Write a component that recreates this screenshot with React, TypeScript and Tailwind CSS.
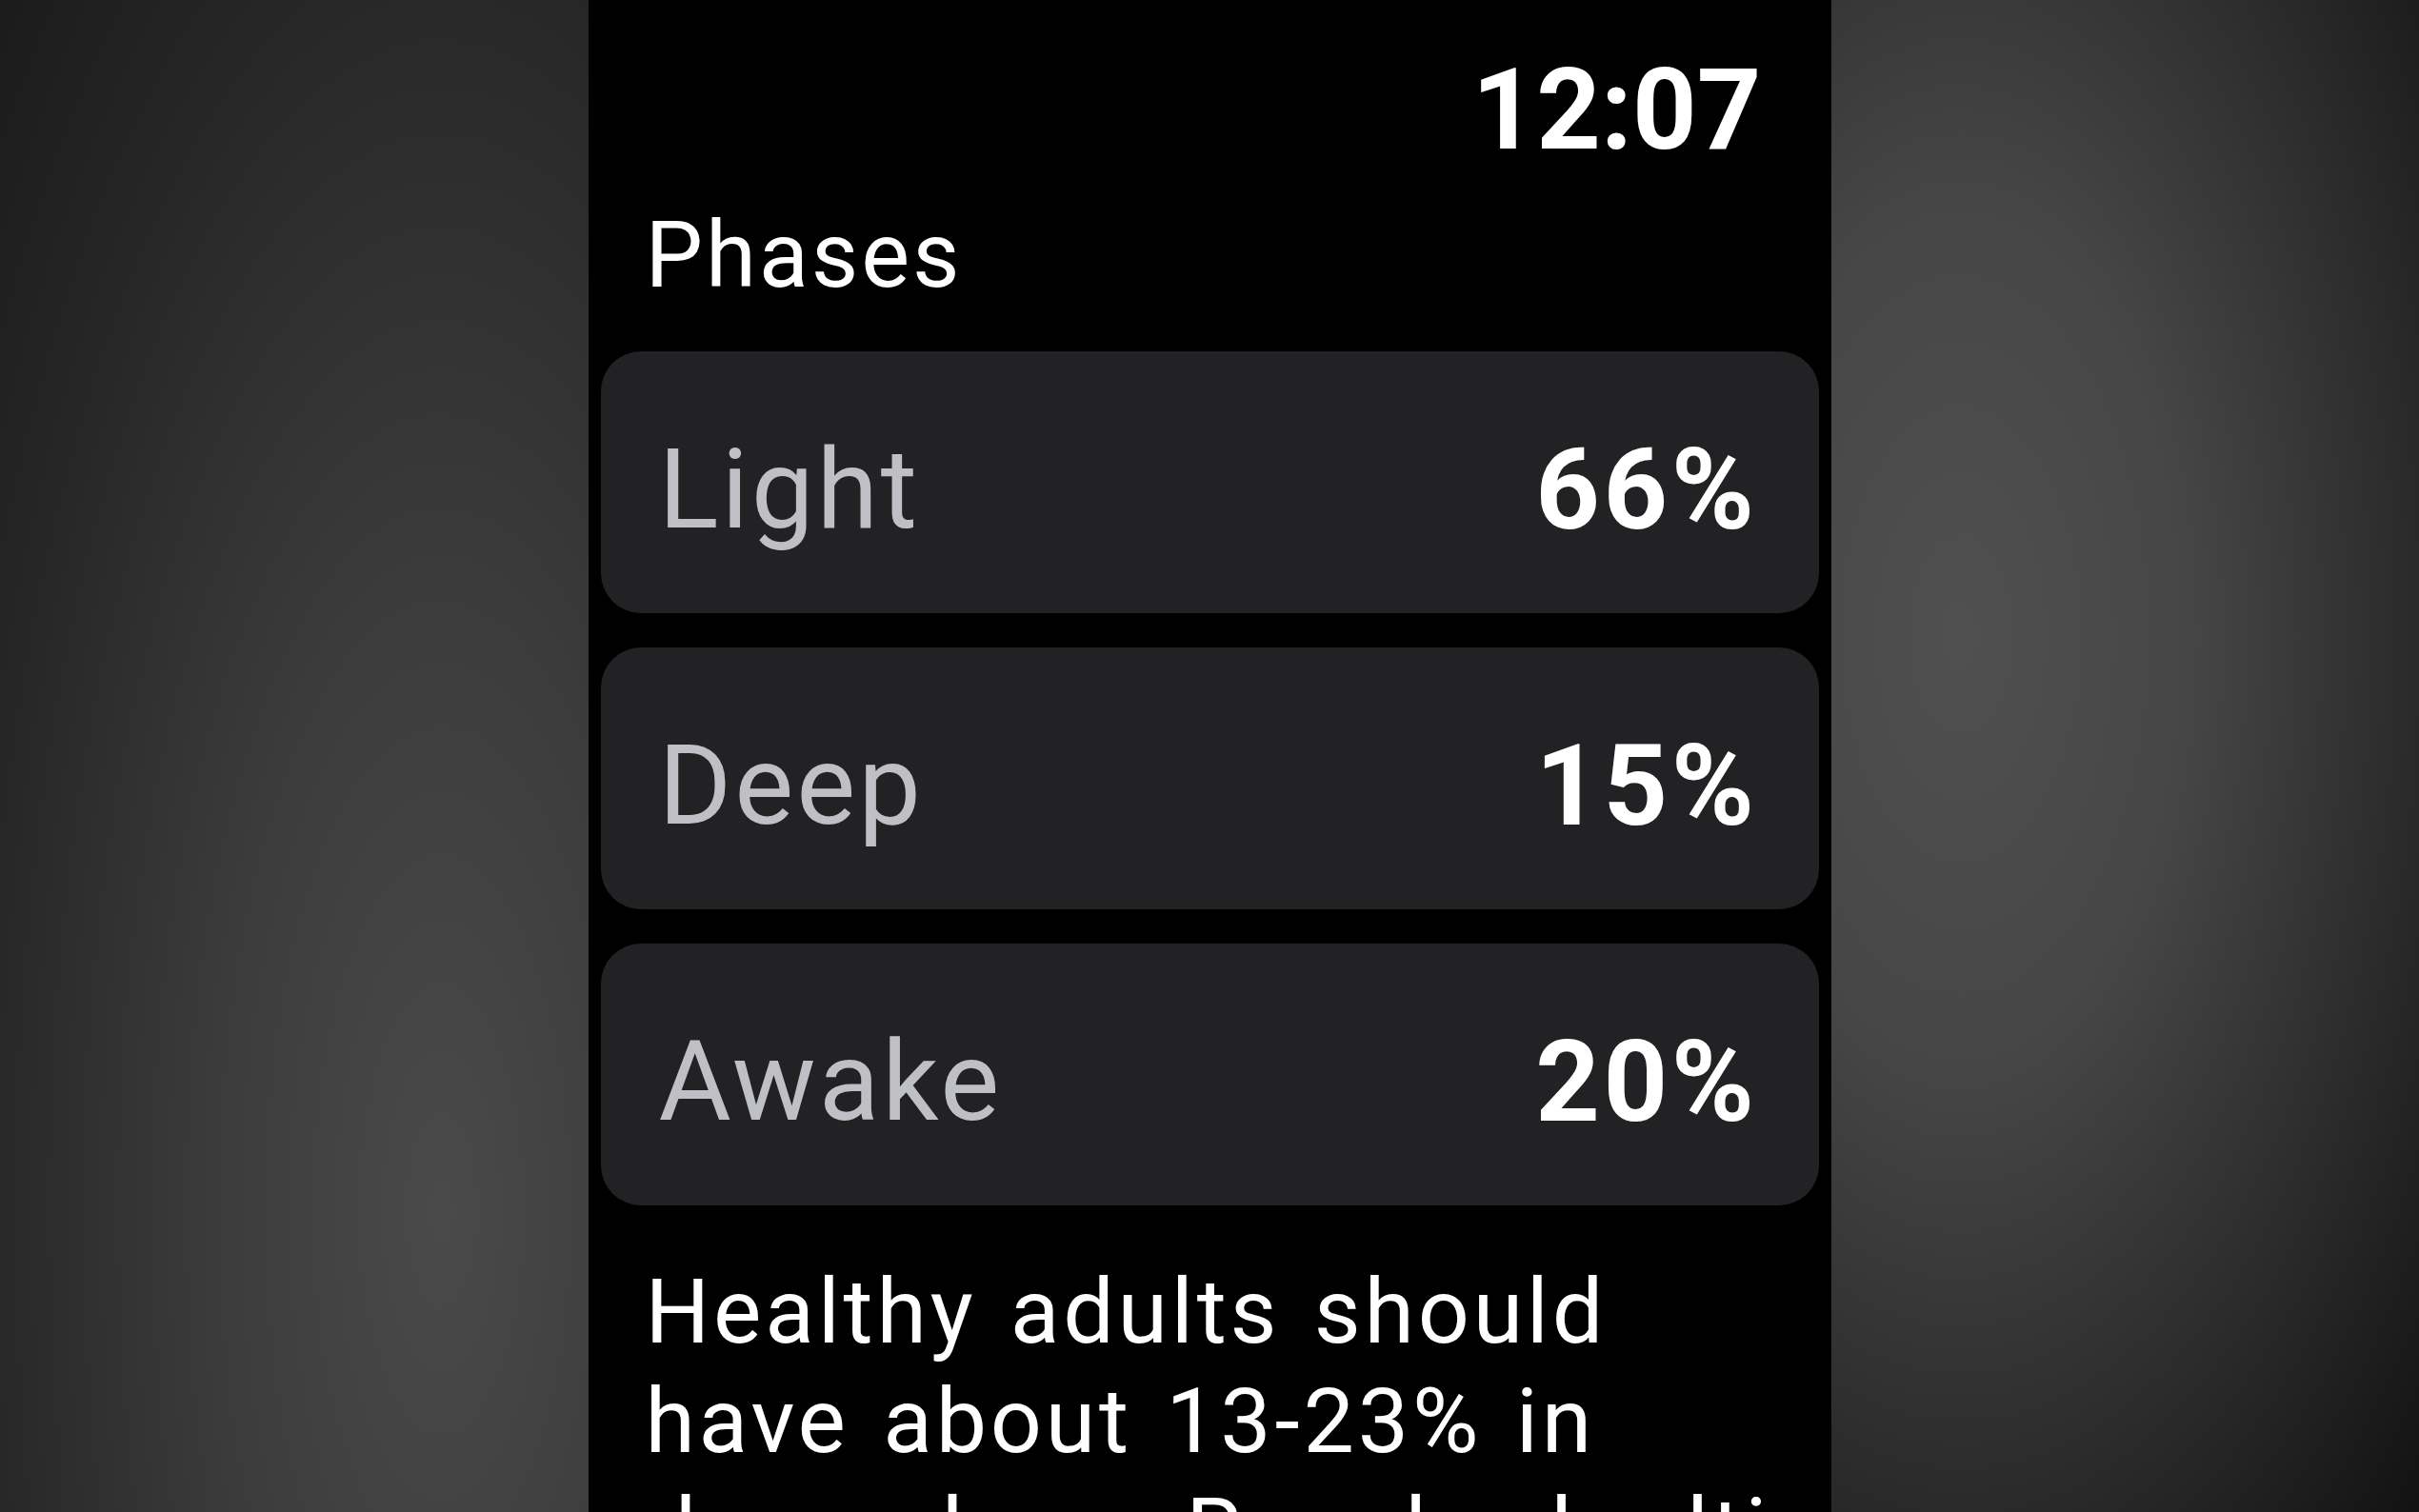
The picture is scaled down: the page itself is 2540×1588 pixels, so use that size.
const phases = [
  { name: 'Light', value: '66%' },
  { name: 'Deep', value: '15%' },
  { name: 'Awake', value: '20%' },
];

const font = { fontFamily: 'Roboto, "Noto Sans", sans-serif' };

const PhaseCard = ({ name, value }: { name: string; value: string }) => (
  <div className="h-[275px] rounded-[42px] bg-[#222224] pl-[61px] pr-[64px] pt-[16px] flex items-center justify-between">
    <span className="text-[117px] leading-none tracking-[0.025em] text-[#bfbfc6]">{name}</span>
    <span className="text-[118px] leading-none tracking-[0.03em] font-bold text-white">{value}</span>
  </div>
);

export default function App() {
  return (
    <div className="h-[1588px] w-full flex overflow-hidden bg-black" style={font}>
      {/* blurred backdrop, left */}
      <div className="flex-1 bg-[radial-gradient(ellipse_at_75%_80%,#4a4a4a_0%,#3c3c3c_35%,#262626_75%,#1b1b1b_100%)]" />

      {/* watch screen */}
      <div className="w-[1305px] shrink-0 bg-black overflow-hidden flex flex-col">
        <div className="flex justify-end pt-[57px] pr-[73px]">
          <span className="text-[118px] leading-none font-bold text-white">12:07</span>
        </div>

        <h2 className="mt-[45px] pl-[60px] text-[96px] leading-none tracking-[0.03em] font-normal text-white">
          Phases
        </h2>

        <div className="mt-[53px] px-[13px] flex flex-col gap-[36px]">
          {phases.map((p) => (
            <PhaseCard key={p.name} name={p.name} value={p.value} />
          ))}
        </div>

        <div className="mt-[54px] pl-[60px] text-[95px] leading-[115px] tracking-[0.04em] [word-spacing:8px] text-white whitespace-nowrap">
          <div>Healthy adults should</div>
          <div>have about 13-23% in</div>
          <div>deep sleep. Regular bedtimes</div>
        </div>
      </div>

      {/* blurred backdrop, right */}
      <div className="flex-1 bg-[radial-gradient(ellipse_at_22%_42%,#505050_0%,#464646_35%,#2c2c2c_68%,#121212_100%)]" />
    </div>
  );
}
